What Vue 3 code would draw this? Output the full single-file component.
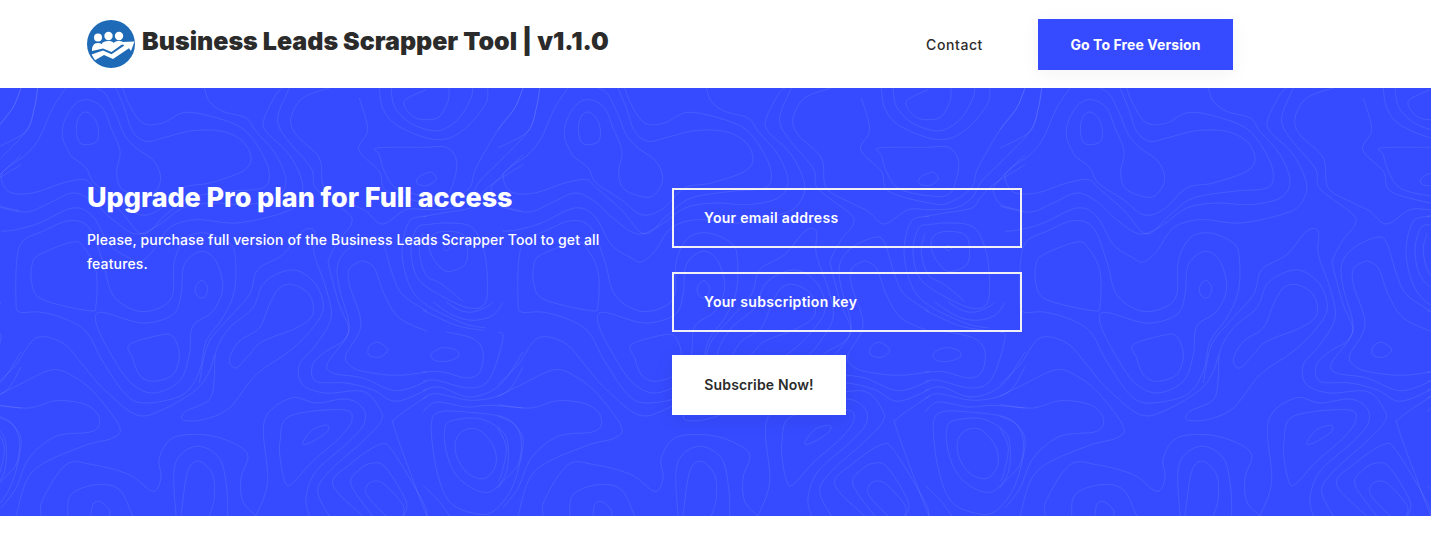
<template>
  <div class="page">
    <header class="topbar">
      <a class="brand">
        <svg class="logo" viewBox="0 0 48 48" width="48" height="48">
          <circle cx="24" cy="24" r="24" fill="#1f6ab6" />
          <circle cx="11" cy="17.500" r="4" fill="#fff" />
          <circle cx="21.500" cy="16" r="4.200" fill="#fff" />
          <circle cx="32" cy="16" r="4.200" fill="#fff" />
          <path d="M5 31c0-5 1.500-8 6-8 1.500 0 2.800.3 3.800 1 1-2.200 3.300-3 6.500-3 2.600 0 4.400.6 5.400 2 1.200-1.400 3-2 5.500-2 3.500 0 5 1.500 5.300 3.500l-3 .2L24.500 32 16 28.500z" fill="#fff" />
          <path d="M4.500 34.500L16 30.500l8.500 3.700L37 25.800l-1.500-3.800 12-.5L44 31l-2-2.800-16 10.800-9-4-9 5.200z" fill="#fff" />
        </svg>
        <span class="brand-name">Business Leads Scrapper Tool | v1.1.0</span>
      </a>
      <nav class="nav">
        <a class="nav-link">Contact</a>
        <a class="nav-btn">Go To Free Version</a>
      </nav>
    </header>

    <section class="hero">
      <svg class="topo" width="1431" height="428" viewBox="0 0 1431 428">
        <path :d="topoPath" fill="none" stroke="rgba(255,255,255,0.09)" stroke-width="1" />
      </svg>
      <div class="hero-text">
        <h2>Upgrade Pro plan for Full access</h2>
        <p>Please, purchase full version of the Business Leads Scrapper Tool to get all features.</p>
      </div>
      <form class="hero-form" @submit.prevent>
        <input type="text" placeholder="Your email address" />
        <input type="text" placeholder="Your subscription key" />
        <button type="submit">Subscribe Now!</button>
      </form>
    </section>
  </div>
</template>

<script setup>
// background contours, traced at 3x. o = open line, c = closed loop
const o = (s, dx = 0, dy = 0) => ({ s, dx, dy, closed: false });
const c = (s, dx = 0, dy = 0) => ({ s, dx, dy, closed: true });

const lines = [
  c('270,72 295,90 307,125 302,160 270,170 248,160 241,120 250,85'),
  o('225,205 200,150 205,100 235,50 275,35 320,60 345,120 372,190 362,255 380,305 450,328 485,300 493,260 470,215 420,180 385,140 360,80 330,20 300,0'),
  o('225,205 270,240 295,285 370,335 430,380 490,365 560,300 640,285 740,250 765,210 740,160 680,130 590,128 500,150 450,160 410,130 385,60 360,0'),
  o('210,0 170,60 130,150 90,200 40,235 15,265 40,312 110,315 200,285 265,275 295,300 370,365 440,438 510,380 580,330 700,310 800,300 820,260 800,200 750,130 680,95 570,73 500,105 440,105 400,50 380,0'),
  o('0,125 50,60 75,0'),
  o('0,180 90,130 115,60 125,0'),
  o('0,355 90,372 160,345 230,315 290,340 350,395 420,438 490,410 560,360 650,345 750,350 840,330 870,280 840,200 780,130 750,90 680,70 640,40 625,0'),
  o('15,430 60,425 130,405 230,360 290,385 340,470 400,510 430,522 470,490 520,420 600,395 720,405 850,378 900,350 920,290 880,200 810,130 805,90 840,20 860,0'),
  c('130,500 230,462 265,480 300,550 300,650 280,668 140,635 108,590 108,530'),
  c('617,577 635,600 625,628 605,625 598,600'),
  c('615,490 660,520 680,600 650,670 590,715 580,800 550,880 470,915 400,880 340,790 305,720 300,680 330,675 440,705 530,680 555,620 565,530'),
  c('400,770 490,742 530,745 550,800 530,860 470,880 430,860 410,810'),
  c('60,640 62,520 80,460 140,430 220,398 280,420 320,520 350,620 420,668 490,660 530,620 535,520 570,450 630,435 700,465 718,510 715,610 680,690 630,760 610,850 560,920 450,945 390,920 320,820 270,730 200,690 130,672 70,672'),
  o('0,890 60,830 120,750 200,765 260,830 320,900 420,980 500,965 600,905 640,850 655,800'),
  c('720,840 700,815 730,760 790,720 820,650 850,600 890,590 940,620 950,680 900,720 800,760 760,800'),
  c('905,548 960,590 982,660 950,720 880,790 780,860 700,960 620,995 560,995 570,970 640,935 655,870 660,790 700,720 770,660 800,590 850,555'),
  o('610,885 635,770 690,700 760,620 785,545 860,500 920,430 955,430 955,500 990,600 1005,690 960,770 910,830 920,890 990,915 1100,910 1150,960 1155,1000 1100,1060 1000,1150 965,1210 1000,1284'),
  o('880,0 845,90 870,150 945,240 955,295 1000,335 1060,380 1065,410 1030,455 1000,510 1000,540 1030,650 1058,720 1040,760 990,790 950,830 960,880 1050,885 1130,905 1200,940 1293,905'),
  o('1100,518 1135,540 1165,620 1210,690 1293,730'),
  o('1293,852 1200,862 1100,850 1060,830 1050,800 1095,710 1060,590 1062,540 1100,518'),
  o('1293,880 1200,908 1100,870 1010,855 995,825 1050,750 1058,700 1030,600 1025,530 1060,480 1130,448 1160,465 1190,560 1220,620 1293,670'),
  c('1145,763 1175,785 1150,808 1118,800 1120,775'),
  o('1150,0 1160,60 1200,110 1293,150 1360,150 1420,110 1470,45 1475,0'),
  o('1185,0 1195,55 1235,100 1293,125 1340,125 1390,90 1425,30 1430,0'),
  o('1290,5 1225,40 1250,85 1293,95 1331,85 1356,40 1359,0'),
  c('1281,178 1351,178 1381,215 1376,270 1351,320 1281,322 1200,300 1165,250 1150,200 1143,180'),
  c('1281,260 1306,253 1321,272 1301,290 1281,293 1262,285 1265,270'),
  o('1090,30 1115,125 1088,185 1150,250 1172,310 1293,345 1351,345 1420,300 1440,240 1506,125 1556,60 1581,0'),
  o('1000,0 920,30 885,90 900,140 970,210 985,300 1060,345 1110,370 1160,408 1230,365 1293,365 1371,360 1421,330 1451,280 1511,220 1596,130 1621,60 1631,0'),
  o('1281,385 1341,375 1421,360 1446,330 1486,290 1581,230'),
  o('1581,200 1500,280 1486,310 1510,350 1575,368'),
  c('70,472 80,480 70,488 60,480', 1281),
  c('70,430 120,440 133,480 125,530 70,550 30,510 18,470 30,440', 1281),
  o('1293,385 1240,400 1218,490 1240,590 1290,650 1400,705 1470,720'),
  o('1293,410 1262,420 1245,490 1265,570 1330,620 1420,660 1470,640 1470,520 1445,440 1411,410 1341,405 1293,410'),
  o('1281,435 1270,490 1290,560 1340,590 1400,640'),
  o('0,950 100,960 180,938 270,950 310,990 290,1030 180,1045 100,1110 60,1200 15,1260'),
  o('0,925 70,890 170,845 240,870 300,920 370,1015 350,1050 260,1075 110,1150 60,1284'),
  o('0,985 50,1010 70,1060 60,1130 15,1180 0,1200'),
  o('0,1020 25,1080 10,1160 0,1180'),
  o('135,1284 140,1235 210,1130 290,1130 400,1160 470,1210 495,1170 490,1110 530,1050 620,1040 700,1060 755,1100 735,1170 740,1240 780,1284'),
  o('215,1284 225,1220 300,1190 370,1205 410,1284'),
  o('285,1284 290,1250 310,1240 340,1265 340,1284'),
  o('540,1284 537,1130 600,1075 670,1110 692,1200 695,1284'),
  o('555,1284 575,1150 610,1120 650,1160 655,1230 640,1284'),
  c('880,985 1040,965 1068,995 1030,1050 950,1120 890,1185 870,1188 855,1130 852,1060'),
  c('920,1065 950,1025 995,1012 990,1035 940,1065'),
  o('780,1284 815,1180 805,1000 885,930 960,945 1050,933 1100,960 1105,1005 1060,1060 960,1150 930,1230 940,1284'),
  o('1100,1284 1010,1190 1060,1130 1150,1070 1190,1090 1280,1240 1293,1284'),
  o('1130,1284 1065,1190 1090,1145 1130,1125 1170,1140 1230,1240 1223,1284'),
  o('1170,1284 1112,1220 1120,1185 1160,1185 1220,1250 1220,1284'),
  o('1293,1284 1260,1200 1195,1020 1200,990 1293,925'),
  c('130,382 170,385 210,430 220,480 200,520 170,530 130,510 100,460 100,410', 1281, 642),
  c('65,380 90,355 170,350 235,385 255,430 250,510 210,565 160,565 100,520 70,450', 1281, 642),
  c('25,370 50,330 130,330 240,345 285,380 300,430 270,550 215,625 160,635 80,600 40,500', 1281, 642),
  o('0,210 60,210 130,228 170,210 180,150 150,110 70,90', 1281, 642),
  c('25,155 60,137 100,145 105,165 70,178 35,175', 1281, 642),
  o('0,238 40,235 140,258 200,230 240,110 225,90', 1281, 642),
  o('0,265 50,255 140,285 230,250 300,150', 1281, 642),
  o('0,290 40,275 150,295 250,270 300,195', 1281, 642),
  o('0,330 40,300 130,315 200,310 300,318', 1281, 642),
  o('70,0 110,25 150,30 190,15 210,0', 1281, 642),
  o('30,0 90,40 150,55 210,40 240,0', 1281, 642),
  o('0,25 100,70 180,85', 1281, 642),
  o('0,550 50,600 80,642', 1281, 642)
];

// catmull-rom through the traced points
const smooth = (pts, closed) => {
  const n = pts.length;
  const at = (i) => (closed ? pts[(i + n) % n] : pts[Math.max(0, Math.min(n - 1, i))]);
  const f = (v) => v.toFixed(1);
  let d = `M${f(pts[0][0])} ${f(pts[0][1])}`;
  const end = closed ? n : n - 1;
  for (let i = 0; i < end; i++) {
    const p0 = at(i - 1), p1 = at(i), p2 = at(i + 1), p3 = at(i + 2);
    d += `C${f(p1[0] + (p2[0] - p0[0]) / 6)} ${f(p1[1] + (p2[1] - p0[1]) / 6)} ${f(p2[0] - (p3[0] - p1[0]) / 6)} ${f(p2[1] - (p3[1] - p1[1]) / 6)} ${f(p2[0])} ${f(p2[1])}`;
  }
  return closed ? d + 'Z' : d;
};

// the pattern repeats every 502px across the hero
const tileOrigins = [-506, -4, 498, 1000];

const topoPath = tileOrigins
  .map((ox) =>
    lines
      .map((l) => {
        const pts = l.s.split(' ').map((p) => {
          const [x, y] = p.split(',').map(Number);
          return [(x + l.dx) / 3 + ox, (y + l.dy) / 3];
        });
        return smooth(pts, l.closed);
      })
      .join('')
  )
  .join('');
</script>

<style>
html, body {
  margin: 0;
  background: #fff;
}
</style>

<style scoped>
.page {
  font-family: Inter, "Open Sans", sans-serif;
  min-height: 536px;
  background: #fff;
  overflow: hidden;
}

.topbar {
  height: 88px;
  display: flex;
  align-items: center;
  padding: 0 198px 0 87px;
  box-sizing: border-box;
}

.brand {
  display: flex;
  align-items: center;
  gap: 7px;
}

.logo {
  display: block;
  flex: none;
}

.brand-name {
  font-size: 25px;
  font-weight: 900;
  color: #2b2b2b;
  margin-top: -6px;
}

.nav {
  margin-left: auto;
  display: flex;
  align-items: center;
  gap: 55px;
}

.nav-link {
  font-size: 14px;
  font-weight: 500;
  color: #2b2b2b;
  letter-spacing: 0.6px;
}

.nav-btn {
  width: 195px;
  height: 51px;
  background: #364bff;
  color: #fff;
  font-size: 14px;
  font-weight: 700;
  letter-spacing: 0.1px;
  display: flex;
  align-items: center;
  justify-content: center;
  box-shadow: 0 4px 20px rgba(0, 0, 0, 0.05);
}

.hero {
  position: relative;
  height: 428px;
  background: #364bff;
  display: flex;
  align-items: flex-start;
  padding: 100px 0 0 87px;
  box-sizing: border-box;
  overflow: hidden;
}

.topo {
  position: absolute;
  left: 0;
  top: 0;
}

.hero-text {
  position: relative;
  width: 585px;
  flex: none;
  color: #fff;
}

.hero-text h2 {
  margin: 0;
  font-size: 27px;
  line-height: 20px;
  font-weight: 800;
  letter-spacing: -0.07px;
}

.hero-text p {
  margin: 20px 0 0;
  width: 530px;
  font-size: 14px;
  font-weight: 500;
  line-height: 24px;
  letter-spacing: 0.14px;
}

.hero-form {
  position: relative;
  display: flex;
  flex-direction: column;
  align-items: flex-start;
  gap: 24px;
}

.hero-form input {
  width: 350px;
  height: 60px;
  box-sizing: border-box;
  border: 2px solid #f0f0f5;
  background: transparent;
  padding: 0 30px 2px;
  font: 600 14px Inter, "Open Sans", sans-serif;
  letter-spacing: 0.3px;
  color: #fff;
  outline: none;
  border-radius: 0;
}

.hero-form input::placeholder {
  color: #fff;
  opacity: 1;
}

.hero-form button {
  width: 174px;
  height: 60px;
  margin-top: -1px;
  padding: 0 0 2px;
  border: none;
  background: #fff;
  color: #2b2b2b;
  font: 600 14px Inter, "Open Sans", sans-serif;
  letter-spacing: 0.15px;
  box-shadow: 0 4px 20px rgba(0, 0, 0, 0.08);
}
</style>
